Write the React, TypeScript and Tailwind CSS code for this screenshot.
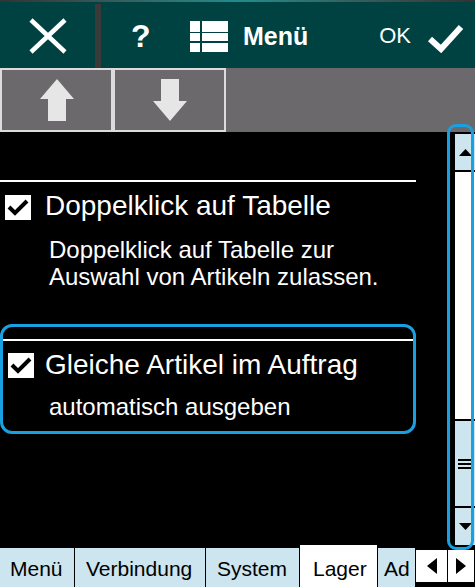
import React from 'react';

function CheckBox() {
    return (
        <div className="w-[26px] h-[25px] bg-white shrink-0">
            <svg width="26" height="25" viewBox="0 0 26 25">
                <polyline points="4,12 10,18 22,6" fill="none" stroke="black" strokeWidth="4" />
            </svg>
        </div>
    );
}

function ArrowButton({ dir }: { dir: 'up' | 'down' }) {
    return (
        <div className="w-[113px] h-[64px] border-2 border-[#dcdcdc] flex items-center justify-center">
            <svg width="34" height="42" viewBox="0 0 34 42">
                {dir === 'up' ? (
                    <polygon points="17,0 34,20 26,20 26,42 8,42 8,20 0,20" fill="#e6e6e6" />
                ) : (
                    <polygon points="8,0 26,0 26,22 34,22 17,42 0,22 8,22" fill="#e6e6e6" />
                )}
            </svg>
        </div>
    );
}

const tabs = [
    { label: 'Menü', w: 'w-[75px] border-r', pl: 'pl-[10px]' },
    { label: 'Verbindung', w: 'w-[131px] border-r', pl: 'pl-[11px]' },
    { label: 'System', w: 'w-[93px]', pl: 'pl-[11px]' },
];

export default function App() {
    return (
        <div className="w-[475px] h-[587px] bg-black relative overflow-hidden flex flex-col font-['Liberation_Sans',Arial,sans-serif] select-none">
            {/* title bar */}
            <div className="h-[2px] bg-linear-to-r from-[#333333] via-[#1d8c8c] to-[#333333]" />
            <div className="h-[66px] bg-[#004141] flex text-white">
                <div className="w-[95px] flex items-center justify-center pt-[2px]">
                    <svg width="40" height="38" viewBox="0 0 40 38">
                        <path d="M3 3 L37 35 M37 3 L3 35" stroke="white" strokeWidth="4.5" />
                    </svg>
                </div>
                <div className="w-[6px] mt-[2px] bg-[#3a3a3a]" />
                <div className="flex-1 flex items-center pt-[2px]">
                    <div className="w-[60px] pl-[30px] text-[32px] font-bold leading-none">?</div>
                    <svg className="ml-[29px]" width="38" height="31" viewBox="0 0 38 31">
                        <g fill="white">
                            <rect x="0" y="0" width="10" height="11" />
                            <rect x="12" y="0" width="26" height="11" />
                            <rect x="0" y="12" width="10" height="8" />
                            <rect x="12" y="12" width="26" height="8" />
                            <rect x="0" y="22" width="10" height="9" />
                            <rect x="12" y="22" width="26" height="9" />
                        </g>
                    </svg>
                    <span className="ml-[15px] text-[25px] font-bold leading-none">Menü</span>
                    <span className="ml-auto text-[22px] leading-none">OK</span>
                    <svg className="ml-[16px] mr-[11px] mt-[5px]" width="37" height="29" viewBox="0 0 37 29">
                        <polyline points="3,15 14,25 34,3" fill="none" stroke="white" strokeWidth="6" />
                    </svg>
                </div>
            </div>

            {/* up / down row */}
            <div className="h-[64px] bg-[#6b696b] flex">
                <ArrowButton dir="up" />
                <ArrowButton dir="down" />
            </div>

            {/* content */}
            <div className="flex-1 flex text-white">
                <div className="w-[416px] pt-[48px]">
                    <div className="h-[2px] bg-white" />
                    <div className="mt-[10px] flex">
                        <div className="pl-[5px] pt-[3px]"><CheckBox /></div>
                        <div className="pl-[14px] text-[28px] leading-[28px]">Doppelklick auf Tabelle</div>
                    </div>
                    <div className="mt-[16px] pl-[49px] text-[24px] leading-[27px]">
                        Doppelklick auf Tabelle zur<br />Auswahl von Artikeln zulassen.
                    </div>
                    <div className="mt-[34px] h-[110px] border-[3px] border-[#19a0e0] rounded-[12px] pt-[12px]">
                        <div className="h-[2px] bg-white" />
                        <div className="mt-[10px] flex">
                            <div className="pl-[5px] pt-[2px]"><CheckBox /></div>
                            <div className="pl-[11px] text-[28px] leading-[28px]">Gleiche Artikel im Auftrag</div>
                        </div>
                        <div className="mt-[14px] pl-[46px] text-[24px] leading-[27px]">automatisch ausgeben</div>
                    </div>
                </div>

                {/* scrollbar */}
                <div className="ml-auto w-[20px] mt-[2px] flex flex-col">
                    <div className="h-[38px] bg-[#cde5ee] border-b-2 border-black flex items-center justify-center">
                        <svg width="13" height="7" viewBox="0 0 13 7"><polygon points="6.5,0 13,7 0,7" fill="black" /></svg>
                    </div>
                    <div className="h-[247px] bg-white" />
                    <div className="h-[89px] bg-[#cde5ee] border-y-2 border-black flex flex-col items-center justify-center gap-[2px]">
                        <div className="w-[14px] h-[2px] bg-black" />
                        <div className="w-[14px] h-[2px] bg-black" />
                        <div className="w-[14px] h-[2px] bg-black" />
                    </div>
                    <div className="flex-1 bg-[#cde5ee] flex items-center justify-center">
                        <svg width="13" height="7" viewBox="0 0 13 7"><polygon points="0,0 13,0 6.5,7" fill="black" /></svg>
                    </div>
                </div>
            </div>

            {/* tab strip */}
            <div className="h-[42px] flex items-start text-black text-[21px] leading-[21px]">
                {tabs.map((t) => (
                    <div key={t.label} className={`${t.w} ${t.pl} mt-[3px] h-[39px] pt-[10px] bg-[#cde5ee] border-black whitespace-nowrap`}>
                        {t.label}
                    </div>
                ))}
                <div className="w-[79px] h-[42px] pl-[13px] pt-[13px] bg-white border-x border-black">Lager</div>
                <div className="w-[37px] mt-[3px] h-[39px] pl-[6px] pt-[10px] bg-[#cde5ee] whitespace-nowrap">Ad</div>
                <div className="w-[60px] h-[34px] mt-[4px] bg-white border border-black flex">
                    <div className="w-[32px] border-r border-black flex items-center justify-center">
                        <svg width="10" height="16" viewBox="0 0 10 16"><polygon points="10,0 10,16 0,8" fill="black" /></svg>
                    </div>
                    <div className="flex-1 flex items-center justify-center">
                        <svg width="10" height="16" viewBox="0 0 10 16"><polygon points="0,0 10,8 0,16" fill="black" /></svg>
                    </div>
                </div>
            </div>

            {/* focus outline around scrollbar */}
            <div className="absolute left-[447px] top-[124px] w-[27px] h-[426px] border-[3px] border-[#19a0e0] rounded-[9px]" />
        </div>
    );
}
